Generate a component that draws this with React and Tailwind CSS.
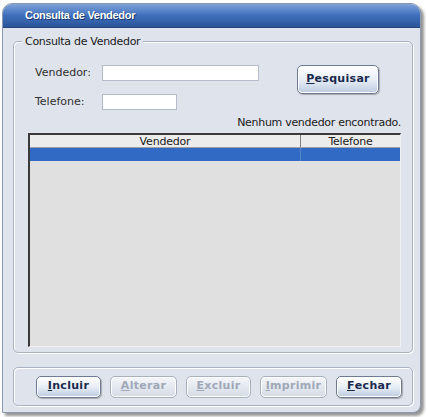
import React from "react";

const font = { fontFamily: '"DejaVu Sans", Verdana, sans-serif' };

function Btn({ w, label, u, rest, disabled, h = "h-[22px]" }) {
  return (
    <div
      className={`${w} ${h} flex items-center justify-center rounded-[5px] border text-[11px] font-bold tracking-[0.3px] ${
        disabled
          ? "border-[#a8b0c0] bg-gradient-to-b from-[#f4f6fa] to-[#d4dbe6] text-[#a0a8b6] shadow-[inset_0_0_0_1px_#ffffff]"
          : "border-[#6f7b92] bg-gradient-to-b from-[#ffffff] via-[#e8eef6] to-[#bccbe0] text-[#1a2a4c] shadow-[inset_0_0_0_1px_#ffffff,1px_1px_1px_rgba(0,0,0,0.25)]"
      }`}
    >
      <span className="underline">{u}</span>
      <span>{rest}</span>
    </div>
  );
}

export default function App() {
  return (
    <div className="w-[428px] h-[417px] bg-white relative" style={font}>
      <div className="absolute left-[2px] top-[3px] w-[419px] h-[410px] rounded-t-[10px] rounded-br-[8px] bg-[#dfe3ec] border border-[#8d99b0] shadow-[3px_3px_3px_rgba(60,60,60,0.55)] flex flex-col overflow-hidden">
        <div className="h-[24px] shrink-0 bg-gradient-to-b from-[#7ea2d8] via-[#3f6fbc] to-[#2a5598] border-b border-[#24467e] flex items-center pl-[22px]">
          <span className="text-white font-bold text-[11px] tracking-[-0.3px] [text-shadow:1px_1px_0_#1c3a70]" style={{ fontFamily: '"Liberation Sans", Arial, sans-serif' }}>
            Consulta de Vendedor
          </span>
        </div>
        <div className="flex flex-col pl-[10px] pr-[7px] pt-[13px]">
          <div className="relative h-[312px] rounded-[5px] border border-[#aab3c4] shadow-[inset_1px_1px_0_#ffffff,1px_1px_0_#ffffff] flex flex-col pl-[21px] pr-[11px] pt-[23px]">
            <span className="absolute -top-[8px] left-[8px] px-[3px] bg-[#dfe3ec] text-[11px] text-[#202020] tracking-[-0.3px]">
              Consulta de Vendedor
            </span>
            <div className="flex">
              <div className="flex flex-col gap-[13px] w-[260px]">
                <div className="flex items-center h-[16px]">
                  <span className="w-[67px] text-[11px] text-[#303030] tracking-[0px]">Vendedor:</span>
                  <div className="w-[157px] h-[16px] bg-white border border-[#b4bccb]" />
                </div>
                <div className="flex items-center h-[16px]">
                  <span className="w-[67px] text-[11px] text-[#303030] tracking-[0px]">Telefone:</span>
                  <div className="w-[75px] h-[16px] bg-white border border-[#b4bccb]" />
                </div>
              </div>
              <div className="ml-[2px]">
                <Btn w="w-[82px]" h="h-[29px]" u="P" rest="esquisar" />
              </div>
            </div>
            <div className="mt-[6px] text-right text-[11px] text-[#202020] tracking-[-0.3px] leading-[13px]">
              Nenhum vendedor encontrado.
            </div>
            <div className="mt-[4px] ml-[-7px] h-[214px] bg-[#e0e0e0] border-l-2 border-t-2 border-[#3a3a3a] border-r border-b border-r-[#f0f0f0] border-b-[#f0f0f0] flex flex-col">
              <div className="flex h-[13px] bg-[#ececec] border-b border-[#a0a0a0] text-[11px] leading-[13px] text-[#202020] tracking-[-0.2px]">
                <div className="w-[271px] text-center border-r border-[#808080]">Vendedor</div>
                <div className="flex-1 text-center">Telefone</div>
              </div>
              <div className="flex h-[13px] bg-[#316ac5]">
                <div className="w-[271px] border-r border-[#5a84c8]" />
                <div className="flex-1" />
              </div>
            </div>
          </div>
          <div className="mt-[14px] h-[39px] rounded-[5px] border border-[#aab3c4] shadow-[inset_1px_1px_0_#ffffff,1px_1px_0_#ffffff] flex items-center pl-[22px] gap-[9px]">
            <Btn w="w-[65px]" u="I" rest="ncluir" />
            <Btn w="w-[67px]" u="A" rest="lterar" disabled />
            <Btn w="w-[65px]" u="E" rest="xcluir" disabled />
            <Btn w="w-[67px]" u="I" rest="mprimir" disabled />
            <Btn w="w-[66px]" u="F" rest="echar" />
          </div>
        </div>
      </div>
    </div>
  );
}
